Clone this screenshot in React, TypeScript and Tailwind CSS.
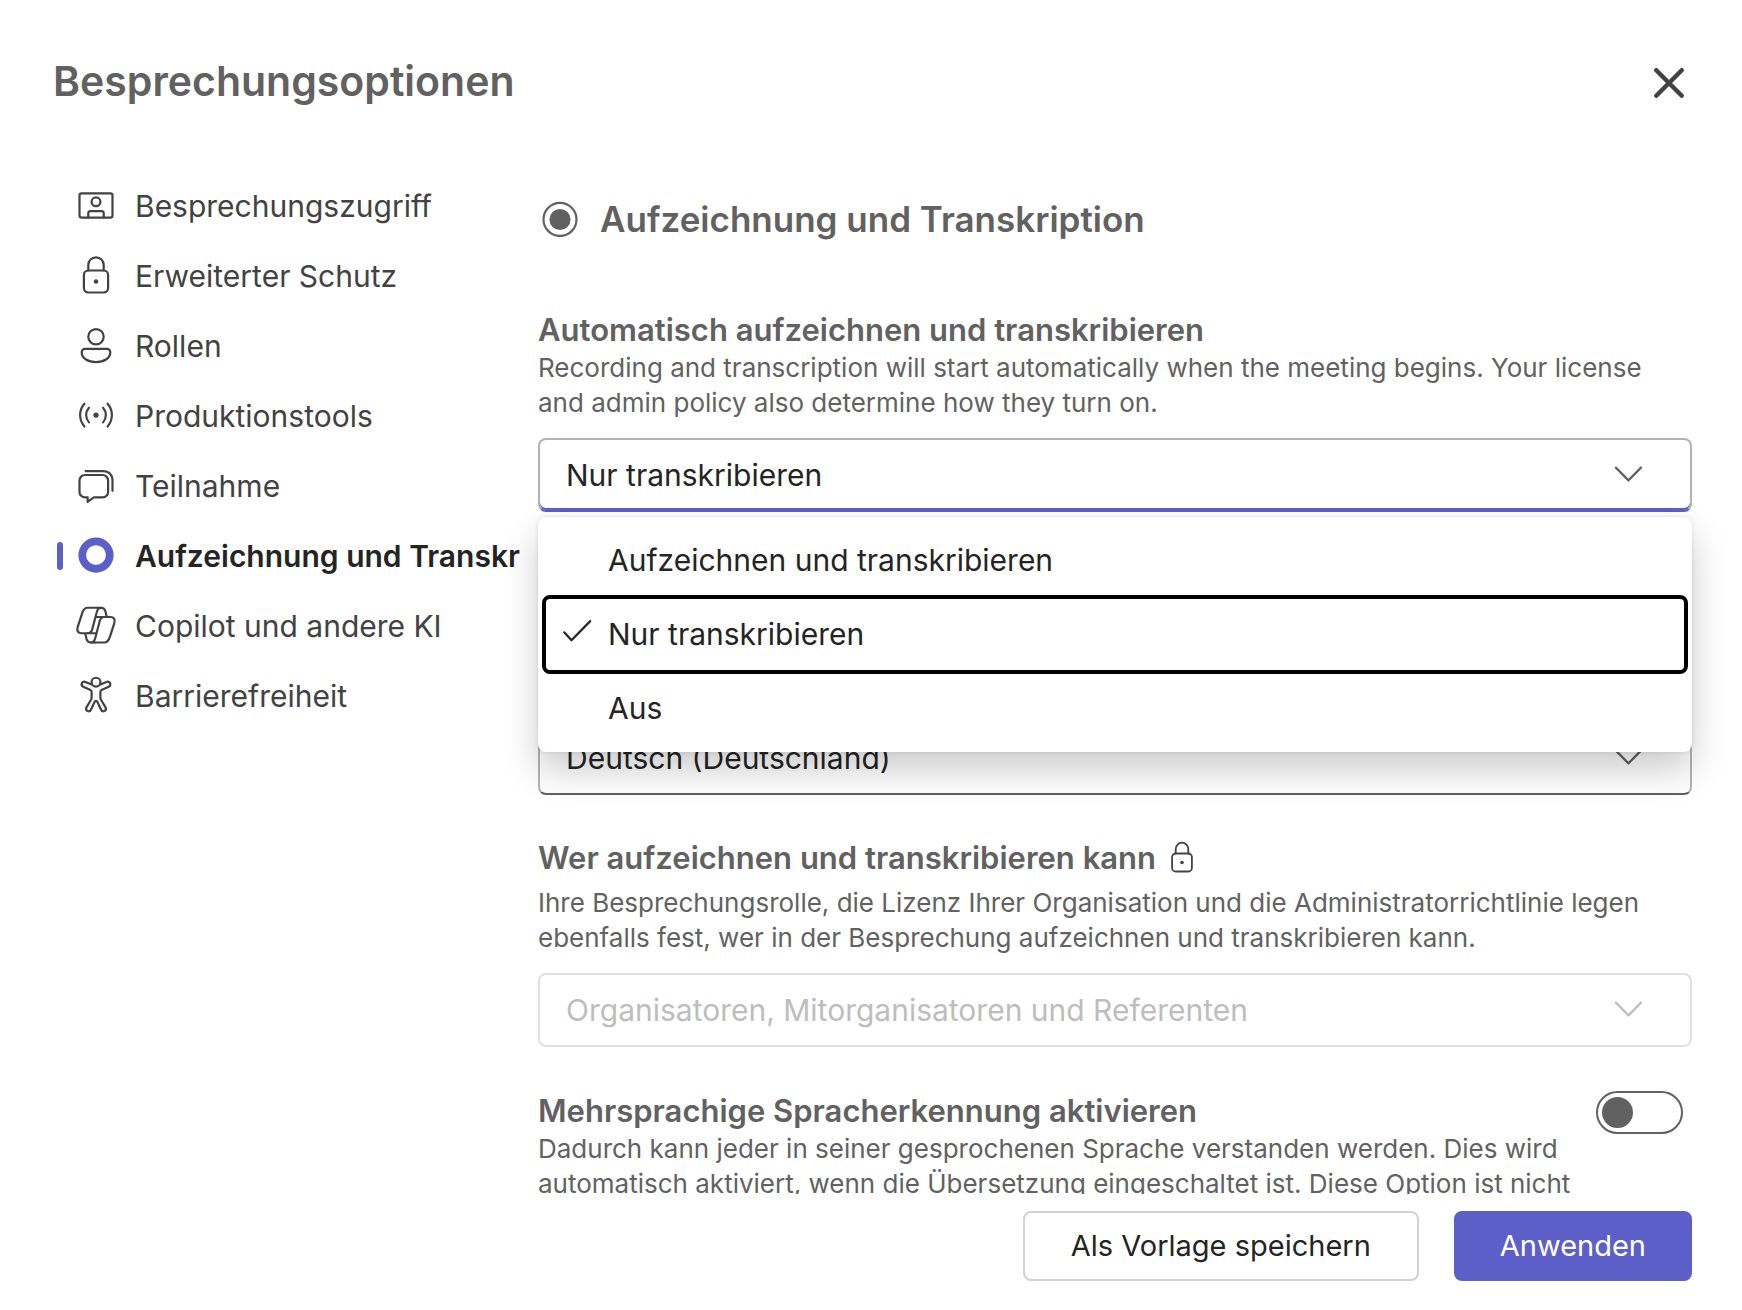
import { useState } from "react";
import type { ReactNode } from "react";
import clsx from "clsx";

interface IconProps {
  children: ReactNode;
  className?: string;
}

function Icon({ children, className }: IconProps) {
  return (
    <svg
      viewBox="0 0 20 20"
      fill="none"
      stroke="currentColor"
      strokeWidth="1"
      strokeLinecap="round"
      strokeLinejoin="round"
      aria-hidden="true"
      className={clsx("shrink-0", className)}
    >
      {children}
    </svg>
  );
}

const lockShape = (
  <>
    <rect x="4.5" y="7.5" width="11" height="10" rx="2" />
    <path d="M6.5 7.5V5a3.5 3.5 0 0 1 7 0v2.5" />
    <circle cx="10" cy="12.5" r="1" fill="currentColor" stroke="none" />
  </>
);

const navItems = [
  {
    id: "access",
    label: "Besprechungszugriff",
    icon: (
      <>
        <rect x="2.5" y="4.3" width="15" height="11" rx="1" />
        <circle cx="10" cy="8.1" r="2" />
        <path d="M6.5 15.3v-2a1 1 0 0 1 1-1h5a1 1 0 0 1 1 1v2" />
      </>
    ),
  },
  { id: "protection", label: "Erweiterter Schutz", icon: lockShape },
  {
    id: "roles",
    label: "Rollen",
    icon: (
      <>
        <circle cx="10" cy="5.8" r="3.5" />
        <path d="M5 11.3h10a1.5 1.5 0 0 1 1.5 1.5c0 2.9-3 4.5-6.5 4.5S3.5 15.7 3.5 12.8A1.5 1.5 0 0 1 5 11.3Z" />
      </>
    ),
  },
  {
    id: "production",
    label: "Produktionstools",
    icon: (
      <>
        <circle cx="10" cy="9.6" r="1.2" fill="currentColor" stroke="none" />
        <path d="M4.7 4.4a8 8 0 0 0 0 10.4M15.3 4.4a8 8 0 0 1 0 10.4M6.8 6.3a4.9 4.9 0 0 0 0 6.6M13.2 6.3a4.9 4.9 0 0 1 0 6.6" />
      </>
    ),
  },
  {
    id: "participation",
    label: "Teilnahme",
    icon: (
      <>
        <path d="M5 5h8a2.5 2.5 0 0 1 2.5 2.5v5.2a2.5 2.5 0 0 1-2.5 2.5H9l-2.8 2v-2H5a2.5 2.5 0 0 1-2.500-2.500V7.500A2.500 2.500 0 0 1 5 5Z" />
        <path d="M5.3 3.2h8.200a4 4 0 0 1 4 4v5" />
      </>
    ),
  },
  {
    id: "recording",
    label: "Aufzeichnung und Transkription",
    icon: <circle cx="10" cy="9.6" r="6.25" strokeWidth="3.5" />,
  },
  {
    id: "copilot",
    label: "Copilot und andere KI",
    icon: (
      <>
        <path d="M10.7 1.7H6.2C4.8 1.7 4.2 2.7 3.8 3.9L1.7 10.4C1.1 12.3 1.9 13.3 3.4 13.3H6.2C7.4 13.3 8 12.6 8.3 11.5L10.3 3.9C10.6 2.6 11.2 1.7 12.3 1.7C13.4 1.7 14 2.3 14.3 3.3L14.8 5.7" />
        <path d="M9.3 17.5h4.5c1.4 0 2-1 2.4-2.2l2.1-6.5C18.9 6.9 18.1 5.9 16.6 5.9H13.8C12.6 5.9 12 6.6 11.7 7.7L9.7 15.3C9.4 16.6 8.8 17.5 7.7 17.5C6.6 17.5 6 16.9 5.7 15.9L5.2 13.7" />
        <path d="M10.7 1.7h1.6M10.1 5.9h3.7M9.900 13.300H6.200M9.300 17.500H7.700" />
      </>
    ),
  },
  {
    id: "accessibility",
    label: "Barrierefreiheit",
    icon: (
      <>
        <circle cx="10" cy="3.7" r="2" />
        <path d="M8.1 4.8 5.2 3.6a1.2 1.2 0 0 0-1 2.2L7.5 7.3c.4.2.6.5.5 1v2.3c0 .4 0 .6-.2 1L5.600 15.300a1.150 1.150 0 0 0 2.100.950L9.400 12.600c.2-.5 1-.5 1.200 0l1.700 3.650a1.150 1.150 0 0 0 2.100-.950L12.200 11.600c-.150-.4-.2-.6-.2-1V8.300c0-.5.1-.8.5-1l3.300-1.500a1.200 1.200 0 0 0-1-2.200L11.900 4.800" />
      </>
    ),
  },
];

const recordOptions = [
  { value: "both", label: "Aufzeichnen und transkribieren" },
  { value: "transcribe", label: "Nur transkribieren" },
  { value: "off", label: "Aus" },
];

interface DropdownProps {
  id: string;
  value: string;
  options: { value: string; label: string }[];
  label?: string;
  open?: boolean;
  disabled?: boolean;
  onChange?: (value: string) => void;
}

function Dropdown({ id, value, options, label, open, disabled, onChange }: DropdownProps) {
  return (
    <div className="relative">
      <select
        id={id}
        value={value}
        aria-label={label}
        disabled={disabled}
        onChange={(e) => onChange?.(e.target.value)}
        className={clsx(
          "block h-[74px] w-full appearance-none rounded-lg border-2 bg-white px-[26px] text-[30px] opacity-100 outline-none",
          disabled && "border-[#e0e0e0] text-[#bdbdbd]",
          !disabled && "border-[#b3b3b3] text-[#242424]",
          !disabled && !open && "border-b-[#616161]",
          open && "border-b-[#5b5fc7] shadow-[inset_0_-2px_0_#5b5fc7]"
        )}
      >
        {options.map((option) => (
          <option key={option.value} value={option.value}>
            {option.label}
          </option>
        ))}
      </select>
      <Icon
        className={clsx(
          "pointer-events-none absolute top-[14px] right-[42px] size-11",
          disabled ? "text-[#bdbdbd]" : "text-[#616161]"
        )}
      >
        <path d="m4.5 7.1 5.7 5.8 5.7-5.8" />
      </Icon>

      {/* Option list, laid over the fields below */}
      {open && (
        <ul
          role="listbox"
          aria-labelledby={`${id}-label`}
          className="absolute inset-x-0 top-full z-10 mt-[5px] flex flex-col gap-[3px] rounded-lg bg-white p-2 shadow-[0_0_4px_rgba(0,0,0,0.12),0_18px_36px_rgba(0,0,0,0.2)]"
        >
          {options.map((option) => (
            <li
              key={option.value}
              role="option"
              aria-selected={option.value === value}
              onClick={() => onChange?.(option.value)}
              className={clsx(
                "flex h-[71px] items-center gap-[9px] rounded-sm pl-[9px] text-[30px] text-[#242424]",
                option.value === value && "outline-4 outline-black"
              )}
            >
              <Icon className="size-11">
                {option.value === value && <path d="m4.2 8.8 3.3 3.600L16 3.700" />}
              </Icon>
              {option.label}
            </li>
          ))}
        </ul>
      )}
    </div>
  );
}

export default function App() {
  const [active, setActive] = useState("recording");
  const [recordMode, setRecordMode] = useState("transcribe");
  const [multilingual, setMultilingual] = useState(false);

  return (
    <div className="flex h-screen flex-col bg-white font-['Inter','Liberation_Sans',sans-serif] text-[#616161]">
      <header className="flex h-[171px] shrink-0 items-start justify-between pt-[54px] pr-[48px] pl-[53px]">
        <h1 className="text-[41px] leading-[54px] font-semibold">Besprechungsoptionen</h1>
        <button type="button" aria-label="Schließen" className="mt-[4px] text-[#424242]">
          <Icon className="size-[50px]">
            <path d="m4.9 4.9 10.2 10.2M15.1 4.9 4.9 15.1" strokeWidth="1.8" />
          </Icon>
        </button>
      </header>

      <div className="flex min-h-0 flex-1 gap-[18px] overflow-hidden pr-[50px] pl-[57px]">
        {/* Section navigation */}
        <nav className="w-[463px] shrink-0">
          <ul>
            {navItems.map((item) => {
              const selected = item.id === active;
              return (
                <li key={item.id}>
                  <button
                    type="button"
                    aria-current={selected ? "page" : undefined}
                    onClick={() => setActive(item.id)}
                    className={clsx(
                      "flex h-[70px] w-full items-center text-left text-[30px]",
                      selected ? "font-semibold text-[#242424]" : "text-[#424242]"
                    )}
                  >
                    <span className={clsx("mr-[11px] h-7 w-[6px] rounded-full", selected && "bg-[#5b5fc7]")} />
                    <Icon className={clsx("mr-[17px] size-11", selected && "text-[#5b5fc7]")}>{item.icon}</Icon>
                    <span className="min-w-0 flex-1 overflow-hidden whitespace-nowrap">{item.label}</span>
                  </button>
                </li>
              );
            })}
          </ul>
        </nav>

        <main className="min-w-0 flex-1">
          <h2 className="mt-[24px] flex h-12 items-center gap-[18px] text-[35px] font-semibold">
            <Icon className="size-11">
              <circle cx="10" cy="10.2" r="7.5" />
              <circle cx="10" cy="10.2" r="4.8" fill="currentColor" stroke="none" />
            </Icon>
            Aufzeichnung und Transkription
          </h2>

          <section className="mt-[67px]">
            <label id="record-label" htmlFor="record" className="block text-[31px] leading-10 font-semibold">
              Automatisch aufzeichnen und transkribieren
            </label>
            <p className="mb-[18px] text-[26px] leading-[35px]">
              Recording and transcription will start automatically when the meeting begins. Your license and admin
              policy also determine how they turn on.
            </p>
            <Dropdown id="record" value={recordMode} options={recordOptions} open onChange={setRecordMode} />
          </section>

          <section className="mt-[209px]">
            <Dropdown
              id="language"
              label="Gesprochene Sprache"
              value="de"
              options={[{ value: "de", label: "Deutsch (Deutschland)" }]}
            />
          </section>

          <section className="mt-[43px]">
            <div className="mb-[7px] flex items-center gap-2">
              <label htmlFor="who" className="text-[31px] leading-10 font-semibold">
                Wer aufzeichnen und transkribieren kann
              </label>
              <Icon className="size-9 text-[#424242]">{lockShape}</Icon>
            </div>
            <p className="mb-[18px] text-[26px] leading-[35px]">
              Ihre Besprechungsrolle, die Lizenz Ihrer Organisation und die Administratorrichtlinie legen ebenfalls
              fest, wer in der Besprechung aufzeichnen und transkribieren kann.
            </p>
            <Dropdown
              id="who"
              value="presenters"
              options={[{ value: "presenters", label: "Organisatoren, Mitorganisatoren und Referenten" }]}
              disabled
            />
          </section>

          <section className="mt-[44px] flex items-start justify-between pr-[9px]">
            <div className="max-w-[1050px] min-w-0">
              <label htmlFor="multilingual" className="block text-[31px] leading-10 font-semibold">
                Mehrsprachige Spracherkennung aktivieren
              </label>
              <p className="text-[26px] leading-[35px]">
                Dadurch kann jeder in seiner gesprochenen Sprache verstanden werden. Dies wird automatisch aktiviert,
                wenn die Übersetzung eingeschaltet ist. Diese Option ist nicht
              </p>
            </div>
            <input
              id="multilingual"
              type="checkbox"
              role="switch"
              checked={multilingual}
              onChange={(e) => setMultilingual(e.target.checked)}
              className="flex h-[43px] w-[87px] shrink-0 appearance-none items-center rounded-full border-2 border-[#616161] px-1 before:size-[31px] before:rounded-full before:bg-[#616161] checked:justify-end"
            />
          </section>
        </main>
      </div>

      <footer className="flex shrink-0 justify-end gap-[35px] pt-[17px] pr-[50px] pb-[29px]">
        <button
          type="button"
          className="h-[70px] rounded-lg border-2 border-[#d1d1d1] bg-white px-[46px] text-[29px] text-[#242424]"
        >
          Als Vorlage speichern
        </button>
        <button type="button" className="h-[70px] rounded-lg bg-[#5b5fc7] px-[46px] text-[29px] text-white">
          Anwenden
        </button>
      </footer>
    </div>
  );
}
